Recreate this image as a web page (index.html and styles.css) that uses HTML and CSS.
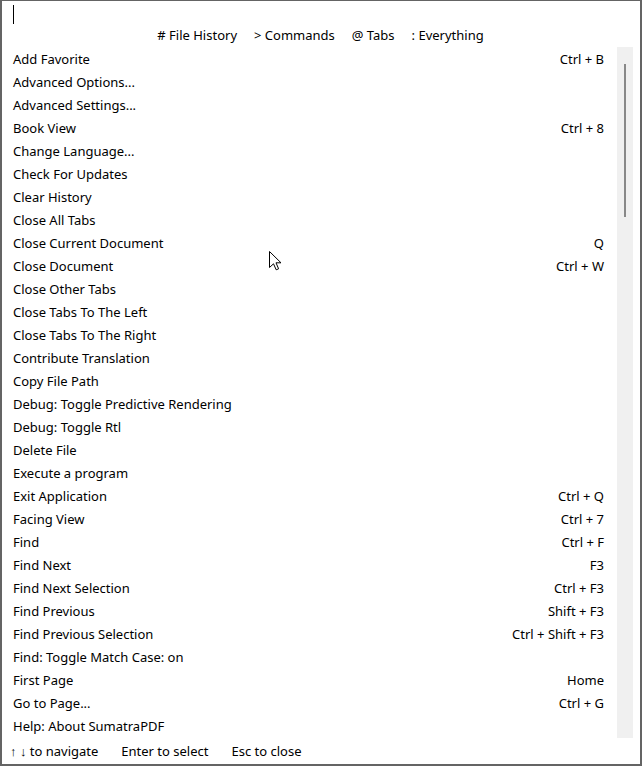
FILE: index.html
```html
<!DOCTYPE html>
<html>
<head>
<meta charset="utf-8">
<link rel="stylesheet" href="styles.css">
</head>
<body>
<div class="palette">
  <div class="search"><span class="caret"></span></div>
  <div class="hints">
    <span># File History</span>
    <span>&gt; Commands</span>
    <span>@ Tabs</span>
    <span>: Everything</span>
  </div>
  <div class="body">
    <div class="list">
      <div class="row"><span>Add Favorite</span><span>Ctrl + B</span></div>
      <div class="row"><span>Advanced Options...</span><span></span></div>
      <div class="row"><span>Advanced Settings...</span><span></span></div>
      <div class="row"><span>Book View</span><span>Ctrl + 8</span></div>
      <div class="row"><span>Change Language...</span><span></span></div>
      <div class="row"><span>Check For Updates</span><span></span></div>
      <div class="row"><span>Clear History</span><span></span></div>
      <div class="row"><span>Close All Tabs</span><span></span></div>
      <div class="row"><span>Close Current Document</span><span>Q</span></div>
      <div class="row"><span>Close Document</span><span>Ctrl + W</span></div>
      <div class="row"><span>Close Other Tabs</span><span></span></div>
      <div class="row"><span>Close Tabs To The Left</span><span></span></div>
      <div class="row"><span>Close Tabs To The Right</span><span></span></div>
      <div class="row"><span>Contribute Translation</span><span></span></div>
      <div class="row"><span>Copy File Path</span><span></span></div>
      <div class="row"><span>Debug: Toggle Predictive Rendering</span><span></span></div>
      <div class="row"><span>Debug: Toggle Rtl</span><span></span></div>
      <div class="row"><span>Delete File</span><span></span></div>
      <div class="row"><span>Execute a program</span><span></span></div>
      <div class="row"><span>Exit Application</span><span>Ctrl + Q</span></div>
      <div class="row"><span>Facing View</span><span>Ctrl + 7</span></div>
      <div class="row"><span>Find</span><span>Ctrl + F</span></div>
      <div class="row"><span>Find Next</span><span>F3</span></div>
      <div class="row"><span>Find Next Selection</span><span>Ctrl + F3</span></div>
      <div class="row"><span>Find Previous</span><span>Shift + F3</span></div>
      <div class="row"><span>Find Previous Selection</span><span>Ctrl + Shift + F3</span></div>
      <div class="row"><span>Find: Toggle Match Case: on</span><span></span></div>
      <div class="row"><span>First Page</span><span>Home</span></div>
      <div class="row"><span>Go to Page...</span><span>Ctrl + G</span></div>
      <div class="row"><span>Help: About SumatraPDF</span><span></span></div>
    </div>
    <div class="scrollbar"><div class="thumb"></div></div>
  </div>
  <div class="footer">
    <span>↑ ↓ to navigate</span>
    <span>Enter to select</span>
    <span>Esc to close</span>
  </div>
  <svg class="pointer" width="13" height="20" viewBox="0 0 13 20">
    <path d="M0.5 0.5 L0.5 16.5 L4.5 12.8 L7.2 18.8 L9.6 17.8 L7 11.8 L12 11.8 Z" fill="#fff" stroke="#000" stroke-width="1" stroke-linejoin="miter"/>
  </svg>
</div>
</body>
</html>
```
FILE: styles.css
```css
html, body {
  margin: 0;
  padding: 0;
  background: #fff;
}
.palette {
  position: relative;
  width: 642px;
  height: 766px;
  box-sizing: border-box;
  border: 2px solid #646464;
  border-top-width: 1px;
  display: flex;
  flex-direction: column;
  font-family: "Noto Sans", Roboto, sans-serif;
  font-size: 13px;
  color: #000;
  overflow: hidden;
}
.search {
  height: 21px;
  padding-left: 11px;
  display: flex;
  align-items: flex-end;
}
.caret {
  width: 1px;
  height: 19px;
  background: #000;
  margin-bottom: -2px;
}
.hints {
  height: 25px;
  display: flex;
  justify-content: center;
  align-items: center;
  gap: 17px;
  padding-right: 1px;
}
.body {
  height: 690px;
  display: flex;
}
.list {
  flex: 1;
  display: flex;
  flex-direction: column;
}
.row {
  height: 23px;
  display: flex;
  justify-content: space-between;
  align-items: center;
  padding: 0 13px 0 11px;
  white-space: nowrap;
}
.scrollbar {
  width: 16px;
  margin-right: 7px;
  height: 691px;
  background: #f0f0f0;
  position: relative;
}
.thumb {
  position: absolute;
  left: 7px;
  top: 17px;
  width: 2px;
  height: 153px;
  background: #888;
}
.footer {
  flex: 1;
  display: flex;
  align-items: center;
  gap: 23px;
  padding-left: 8px;
}
.pointer {
  position: absolute;
  left: 267px;
  top: 250px;
}
```
